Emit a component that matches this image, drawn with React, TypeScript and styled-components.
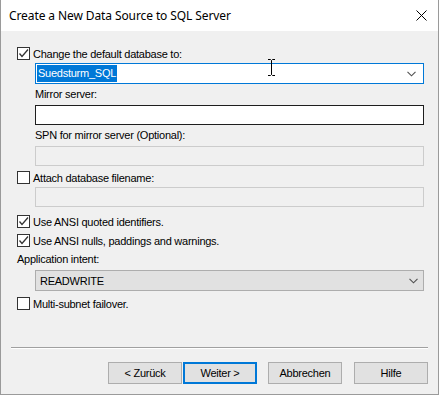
import React from "react";
import styled, { createGlobalStyle } from "styled-components";

const Global = createGlobalStyle`
  html, body { margin: 0; padding: 0; background: #ffffff; }
  body { font-family: "Liberation Sans", Arial, sans-serif; font-size: 11px; letter-spacing: -0.25px; color: #000; }
  * { box-sizing: border-box; }
`;

const Window = styled.div`
  width: 439px;
  height: 395px;
  display: flex;
  flex-direction: column;
  border: 1px solid #9a9a9a;
  border-top: none;
  background: #f0f0f0;
`;

const TitleBar = styled.div`
  height: 31px;
  flex: none;
  background: #ffffff;
  display: flex;
  align-items: center;
  justify-content: space-between;
  padding: 0 11px 0 8px;
`;

const Title = styled.span`
  font-family: "Noto Sans", "Open Sans", sans-serif;
  font-size: 12px;
  color: #000;
  letter-spacing: -0.1px;
`;

const CloseButton = styled.div`
  width: 12px;
  height: 12px;
  display: flex;
  align-items: center;
  justify-content: center;
`;

const Body = styled.div`
  flex: 1;
  display: flex;
  flex-direction: column;
  padding: 16px 0 0 16px;
`;

const Indented = styled.div<{ $mt?: number }>`
  margin-left: 18px;
  margin-top: ${(p) => p.$mt ?? 0}px;
  width: 389px;
`;

const Label = styled.div<{ $mt?: number; $indent?: boolean }>`
  height: 13px;
  line-height: 13px;
  margin-top: ${(p) => p.$mt ?? 0}px;
  margin-left: ${(p) => (p.$indent ? 18 : 0)}px;
  color: #000;
  white-space: nowrap;
`;

const CheckRow = styled.label<{ $mt?: number }>`
  display: flex;
  align-items: center;
  height: 13px;
  margin-top: ${(p) => p.$mt ?? 0}px;
  gap: 3px;
  white-space: nowrap;
`;

const Box = styled.span`
  width: 13px;
  height: 13px;
  flex: none;
  border: 1px solid #333333;
  background: #ffffff;
  display: flex;
  align-items: center;
  justify-content: center;
`;

const TextBox = styled.div<{ $disabled?: boolean }>`
  height: 20px;
  width: 100%;
  border: 1px solid ${(p) => (p.$disabled ? "#cccccc" : "#1e1e1e")};
  background: ${(p) => (p.$disabled ? "#f0f0f0" : "#ffffff")};
`;

const Combo = styled.div<{ $variant: "edit" | "list" }>`
  position: relative;
  height: 21px;
  width: 100%;
  display: flex;
  align-items: center;
  justify-content: space-between;
  border: 1px solid ${(p) => (p.$variant === "edit" ? "#0078d7" : "#adadad")};
  background: ${(p) => (p.$variant === "edit" ? "#ffffff" : "#e1e1e1")};
  padding: ${(p) => (p.$variant === "edit" ? "0 7px 0 1px" : "0 5px 0 4px")};
`;

const Selected = styled.span`
  background: #0078d7;
  color: #ffffff;
  height: 17px;
  line-height: 17px;
  padding: 0 1px;
`;

const ListValue = styled.span`
  color: #000;
`;

const Cursor = styled.svg`
  position: absolute;
  left: 231px;
  top: -5px;
`;

const Separator = styled.div`
  margin-top: 37px;
  margin-left: -6px;
  width: 417px;
  height: 1px;
  background: #a0a0a0;
  box-shadow: 0 1px 0 #ffffff;
`;

const ButtonRow = styled.div`
  display: flex;
  margin-top: 14px;
  margin-left: 91px;
`;

const Button = styled.div<{ $primary?: boolean; $gap?: number }>`
  width: 74px;
  height: 22px;
  margin-left: ${(p) => p.$gap ?? 0}px;
  display: flex;
  align-items: center;
  justify-content: center;
  background: #e1e1e1;
  border: ${(p) => (p.$primary ? "2px solid #0078d7" : "1px solid #adadad")};
  color: #000;
`;

const Check = () => (
  <svg width="11" height="11" viewBox="0 0 11 11">
    <polyline points="1.5,5.5 4,8.5 10,1.5" fill="none" stroke="#333" strokeWidth="1.3" />
  </svg>
);

const Chevron = () => (
  <svg width="9" height="6" viewBox="0 0 9 6">
    <polyline points="0.5,0.8 4.5,4.8 8.5,0.8" fill="none" stroke="#505050" strokeWidth="1.1" />
  </svg>
);

const CheckItem = ({ checked, label, mt }: { checked?: boolean; label: string; mt?: number }) => (
  <CheckRow $mt={mt}>
    <Box>{checked ? <Check /> : null}</Box>
    <span>{label}</span>
  </CheckRow>
);

export default function App() {
  return (
    <>
      <Global />
      <Window>
        <TitleBar>
          <Title>Create a New Data Source to SQL Server</Title>
          <CloseButton>
            <svg width="11" height="11" viewBox="0 0 11 11">
              <path d="M0.5 0.5 L10.5 10.5 M10.5 0.5 L0.5 10.5" stroke="#000" strokeWidth="1" fill="none" />
            </svg>
          </CloseButton>
        </TitleBar>
        <Body>
          <CheckItem checked label="Change the default database to:" />
          <Indented $mt={3}>
            <Combo $variant="edit">
              <Selected>Suedsturm_SQL</Selected>
              <Chevron />
              <Cursor width="9" height="17" viewBox="0 0 9 17">
                <path d="M1 0.5 H3.5 L4.5 1.5 L5.5 0.5 H8 M4.5 1.5 V15.5 M1 16.5 H3.5 L4.5 15.5 L5.5 16.5 H8" stroke="#000" strokeWidth="1" fill="none" />
              </Cursor>
            </Combo>
          </Indented>
          <Label $indent $mt={4}>Mirror server:</Label>
          <Indented $mt={4}>
            <TextBox />
          </Indented>
          <Label $indent $mt={4}>SPN for mirror server (Optional):</Label>
          <Indented $mt={4}>
            <TextBox $disabled />
          </Indented>
          <CheckItem label="Attach database filename:" mt={5} />
          <Indented $mt={3}>
            <TextBox $disabled />
          </Indented>
          <CheckItem checked label="Use ANSI quoted identifiers." mt={8} />
          <CheckItem checked label="Use ANSI nulls, paddings and warnings." mt={6} />
          <Label $mt={6}>Application intent:</Label>
          <Indented $mt={4}>
            <Combo $variant="list">
              <ListValue>READWRITE</ListValue>
              <Chevron />
            </Combo>
          </Indented>
          <CheckItem label="Multi-subnet failover." mt={6} />
          <Separator />
          <ButtonRow>
            <Button>&lt; Zurück</Button>
            <Button $primary $gap={1}>Weiter &gt;</Button>
            <Button $gap={11}>Abbrechen</Button>
            <Button $gap={12}>Hilfe</Button>
          </ButtonRow>
        </Body>
      </Window>
    </>
  );
}
